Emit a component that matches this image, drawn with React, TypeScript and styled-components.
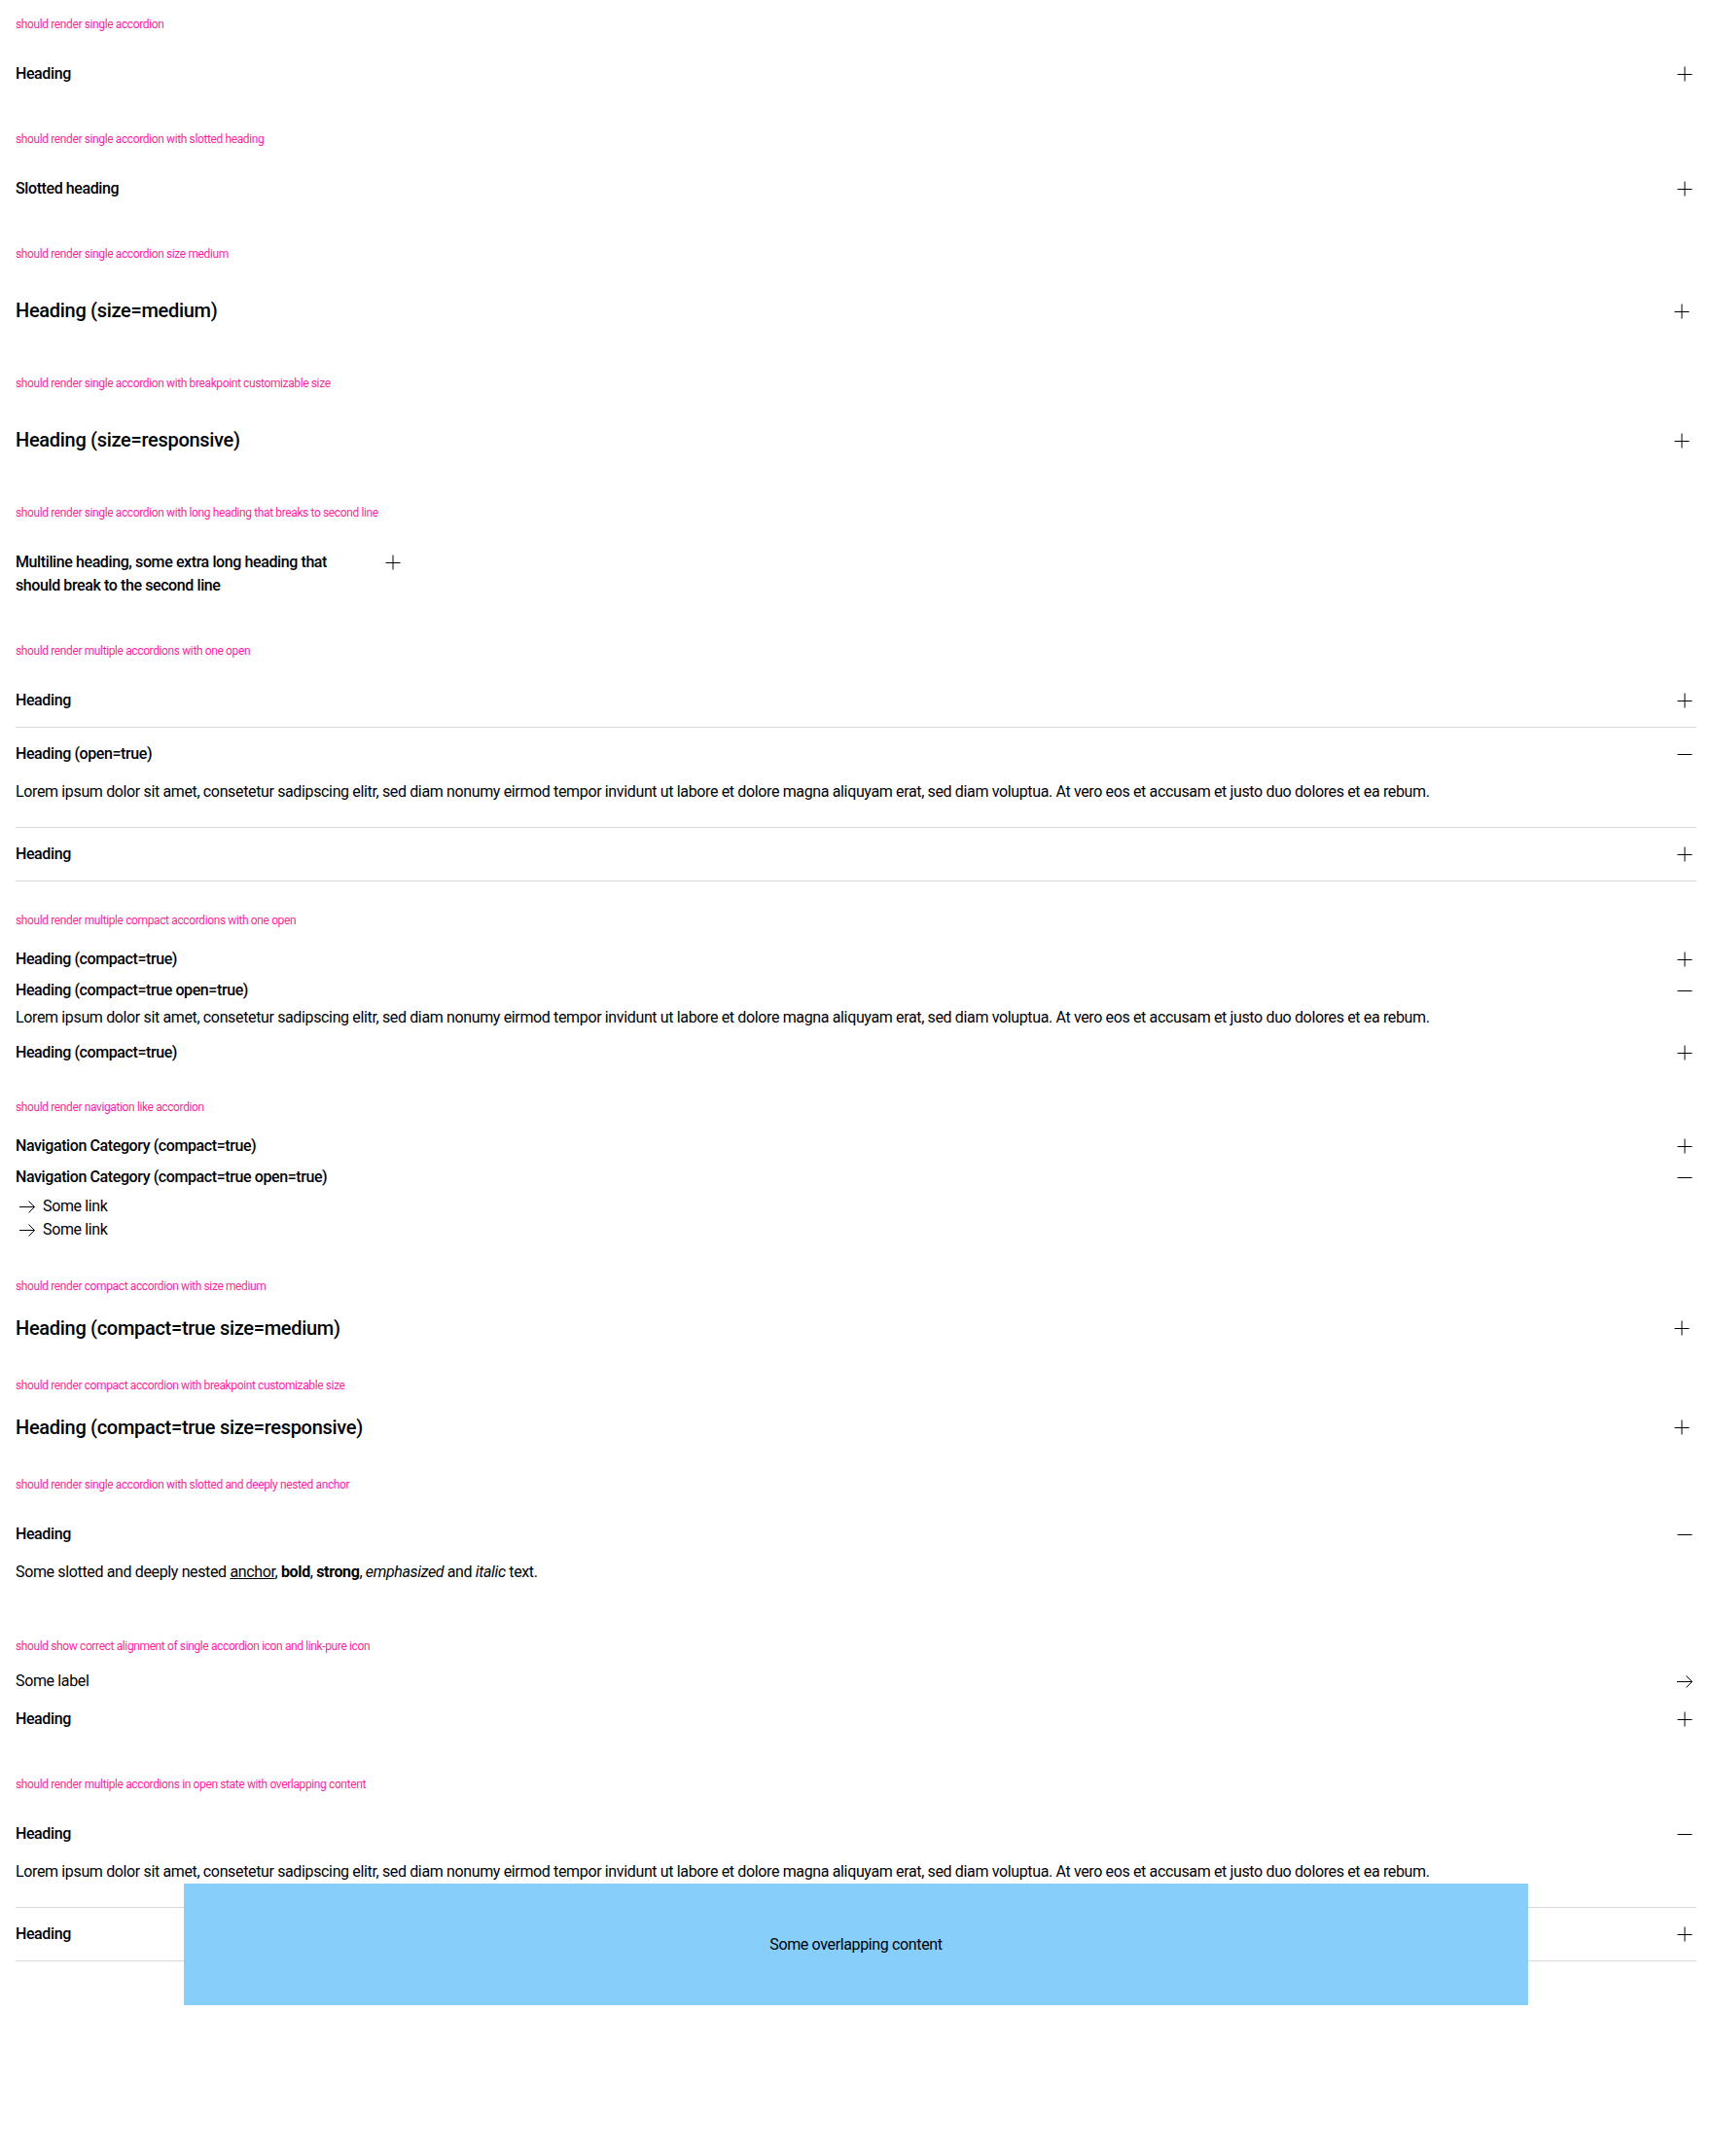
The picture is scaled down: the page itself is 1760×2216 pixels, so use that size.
import React from 'react';
import styled, { createGlobalStyle, css } from 'styled-components';

const GlobalStyle = createGlobalStyle`
  html, body {
    margin: 0;
    padding: 0;
    background: #ffffff;
  }
  body {
    min-height: 100vh;
    padding-top: 1px;
    box-sizing: border-box;
    color: #010205;
    font-family: Roboto, "Liberation Sans", Arial, sans-serif;
    font-size: 16px;
    -webkit-font-smoothing: antialiased;
  }
`;

type Size = 'small' | 'medium';

const Playground = styled.section`
  padding: 16px;
`;

const Title = styled.p`
  margin: 0 0 16px;
  font-size: 12px;
  line-height: 16px;
  letter-spacing: -0.38px;
  color: #ff1fa0;
`;

const AccordionRoot = styled.div<{ $bordered?: boolean; $maxWidth?: number }>`
  ${({ $bordered }) => $bordered && css`border-bottom: 1px solid #d8d8db;`}
  ${({ $maxWidth }) => $maxWidth && css`max-width: ${$maxWidth}px;`}
`;

const Header = styled.div<{ $size: Size; $compact?: boolean }>`
  display: flex;
  align-items: flex-start;
  justify-content: space-between;
  gap: 24px;
  padding: ${({ $size, $compact }) =>
    $compact ? ($size === 'medium' ? '4.5px 0' : '4px 0') : $size === 'medium' ? '20px 0' : '15px 0'};
`;

const HeadingText = styled.h3<{ $size: Size }>`
  margin: 0;
  font-weight: 500;
  font-size: ${({ $size }) => ($size === 'medium' ? '20px' : '16px')};
  line-height: ${({ $size }) => ($size === 'medium' ? '29px' : '24px')};
  letter-spacing: ${({ $size }) => ($size === 'medium' ? '-0.3px' : '-0.4px')};
`;

const IconBox = styled.span<{ $size: Size }>`
  flex-shrink: 0;
  display: flex;
  align-items: center;
  justify-content: center;
  width: ${({ $size }) => ($size === 'medium' ? '30px' : '24px')};
  height: ${({ $size }) => ($size === 'medium' ? '29px' : '24px')};
  color: #010205;
`;

const Content = styled.div<{ $compact?: boolean; $nav?: boolean }>`
  position: relative;
  padding-top: ${({ $nav }) => ($nav ? '2px' : '0')};
  padding-bottom: ${({ $compact, $nav }) => ($nav ? '6px' : $compact ? '8px' : '24px')};
`;

const BodyText = styled.p`
  margin: 0;
  font-size: 16px;
  line-height: 24px;
  letter-spacing: -0.36px;

  a {
    color: inherit;
    text-decoration: underline;
  }
  b, strong {
    font-weight: 700;
  }
`;

const NavLink = styled.a`
  display: flex;
  align-items: center;
  gap: 4px;
  font-size: 16px;
  line-height: 24px;
  letter-spacing: -0.36px;
  color: #010205;
  text-decoration: none;
`;

const LinkPure = styled.a`
  display: flex;
  align-items: center;
  justify-content: space-between;
  font-size: 16px;
  line-height: 24px;
  letter-spacing: -0.36px;
  color: #010205;
  text-decoration: none;
`;

const Overlay = styled.div`
  position: absolute;
  left: 10%;
  z-index: 1;
  width: 80%;
  height: 125px;
  display: flex;
  align-items: center;
  justify-content: center;
  background: #87cefa;
  font-size: 16px;
  letter-spacing: -0.36px;
`;

const PlusIcon = () => (
  <svg width="24" height="24" viewBox="0 0 24 24" fill="none" stroke="currentColor" strokeWidth="1">
    <path d="M12 4.5v15M4.5 12.5h15" />
  </svg>
);

const MinusIcon = () => (
  <svg width="24" height="24" viewBox="0 0 24 24" fill="none" stroke="currentColor" strokeWidth="1">
    <path d="M4.5 12.5h15" />
  </svg>
);

const ArrowIcon = () => (
  <svg width="24" height="24" viewBox="0 0 24 24" fill="none" stroke="currentColor" strokeWidth="1">
    <path d="M4 12.5h15.5M13.5 6.5l6 6-6 6" />
  </svg>
);

type AccordionProps = {
  heading: React.ReactNode;
  size?: Size;
  compact?: boolean;
  open?: boolean;
  bordered?: boolean;
  nav?: boolean;
  maxWidth?: number;
  children?: React.ReactNode;
};

const Accordion = ({ heading, size = 'small', compact, open, bordered, nav, maxWidth, children }: AccordionProps) => (
  <AccordionRoot $bordered={bordered} $maxWidth={maxWidth}>
    <Header $size={size} $compact={compact}>
      <HeadingText $size={size}>{heading}</HeadingText>
      <IconBox $size={size}>{open ? <MinusIcon /> : <PlusIcon />}</IconBox>
    </Header>
    {open && (
      <Content $compact={compact} $nav={nav}>
        {children}
      </Content>
    )}
  </AccordionRoot>
);

const lorem =
  'Lorem ipsum dolor sit amet, consetetur sadipscing elitr, sed diam nonumy eirmod tempor invidunt ut labore et dolore magna aliquyam erat, sed diam voluptua. At vero eos et accusam et justo duo dolores et ea rebum.';

const Link = () => (
  <NavLink href="#">
    <ArrowIcon />
    Some link
  </NavLink>
);

export default function App() {
  return (
    <>
      <GlobalStyle />
      <Playground>
        <Title>should render single accordion</Title>
        <Accordion heading="Heading" />
      </Playground>

      <Playground>
        <Title>should render single accordion with slotted heading</Title>
        <Accordion heading="Slotted heading" />
      </Playground>

      <Playground>
        <Title>should render single accordion size medium</Title>
        <Accordion heading="Heading (size=medium)" size="medium" />
      </Playground>

      <Playground>
        <Title>should render single accordion with breakpoint customizable size</Title>
        <Accordion heading="Heading (size=responsive)" size="medium" />
      </Playground>

      <Playground>
        <Title>should render single accordion with long heading that breaks to second line</Title>
        <Accordion heading="Multiline heading, some extra long heading that should break to the second line" maxWidth={400} />
      </Playground>

      <Playground>
        <Title>should render multiple accordions with one open</Title>
        <Accordion heading="Heading" bordered />
        <Accordion heading="Heading (open=true)" bordered open>
          <BodyText>{lorem}</BodyText>
        </Accordion>
        <Accordion heading="Heading" bordered />
      </Playground>

      <Playground>
        <Title>should render multiple compact accordions with one open</Title>
        <Accordion heading="Heading (compact=true)" compact />
        <Accordion heading="Heading (compact=true open=true)" compact open>
          <BodyText>{lorem}</BodyText>
        </Accordion>
        <Accordion heading="Heading (compact=true)" compact />
      </Playground>

      <Playground>
        <Title>should render navigation like accordion</Title>
        <Accordion heading="Navigation Category (compact=true)" compact />
        <Accordion heading="Navigation Category (compact=true open=true)" compact open nav>
          <Link />
          <Link />
        </Accordion>
      </Playground>

      <Playground>
        <Title>should render compact accordion with size medium</Title>
        <Accordion heading="Heading (compact=true size=medium)" size="medium" compact />
      </Playground>

      <Playground>
        <Title>should render compact accordion with breakpoint customizable size</Title>
        <Accordion heading="Heading (compact=true size=responsive)" size="medium" compact />
      </Playground>

      <Playground>
        <Title>should render single accordion with slotted and deeply nested anchor</Title>
        <Accordion heading="Heading" open>
          <BodyText>
            Some slotted and deeply nested <a href="#">anchor</a>, <b>bold</b>, <strong>strong</strong>,{' '}
            <em>emphasized</em> and <i>italic</i> text.
          </BodyText>
        </Accordion>
      </Playground>

      <Playground>
        <Title>should show correct alignment of single accordion icon and link-pure icon</Title>
        <LinkPure href="#">
          Some label
          <ArrowIcon />
        </LinkPure>
        <Accordion heading="Heading" />
      </Playground>

      <Playground>
        <Title>should render multiple accordions in open state with overlapping content</Title>
        <Accordion heading="Heading" bordered open>
          <BodyText>{lorem}</BodyText>
          <Overlay>Some overlapping content</Overlay>
        </Accordion>
        <Accordion heading="Heading" bordered />
      </Playground>
    </>
  );
}
